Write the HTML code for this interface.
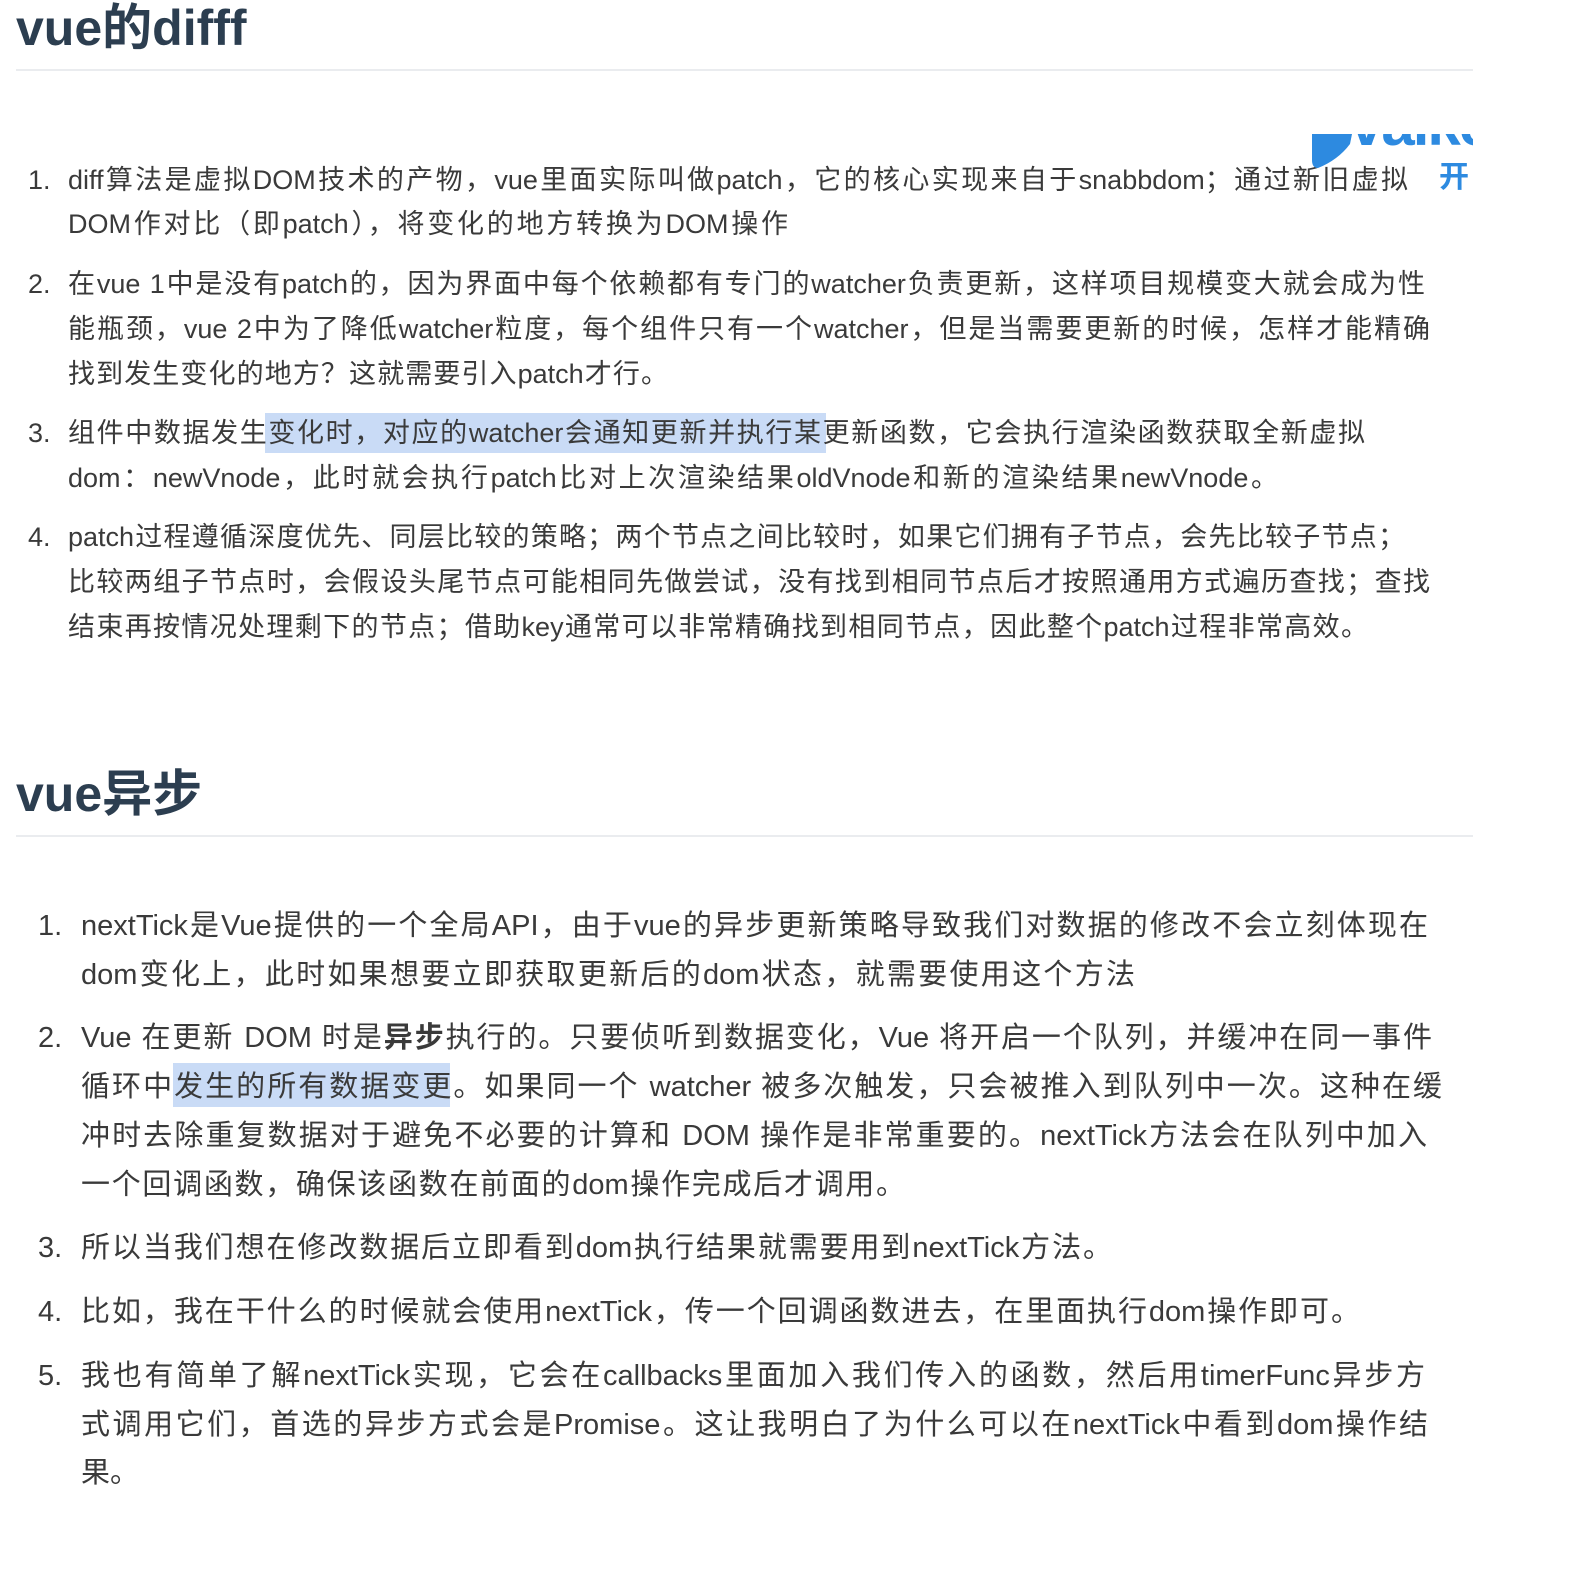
<!DOCTYPE html>
<html><head><meta charset="utf-8"><style>
body{margin:0;background:#fff;width:1580px;height:1592px;position:relative;overflow:hidden;font-family:"Liberation Sans","Noto Sans CJK SC",sans-serif;color:#3a3a3a}
.h{position:absolute;left:16px;font-weight:bold;font-size:50px;color:#2c3e50;line-height:60px}
.hr{position:absolute;left:16px;width:1457px;height:2px;background:#eaecef}
.l{position:absolute;white-space:nowrap;text-align:justify;text-align-last:justify;height:40px;line-height:40px;z-index:2}
.a{font-size:27px}
.b{font-size:29px;height:44px;line-height:44px}
.n{position:absolute;white-space:nowrap;z-index:2}
.hl{position:absolute;background:#c9dbf6;z-index:1}
</style></head><body>
<div class="h" style="top:-2px">vue的difff</div>
<div class="hr" style="top:69px"></div>

<div style="position:absolute;left:1300px;top:134px;width:173px;height:36px;overflow:hidden;z-index:3">
<svg width="60" height="40" style="position:absolute;left:8px;top:0"><path d="M4 0 H44 L42 10 Q30 26 10 34 Q4 34 4 26 Z" fill="#2d8ae0"/></svg>
<div style="position:absolute;left:50px;top:-44px;font-size:60px;font-weight:bold;color:#2d8ae0;font-family:'Liberation Sans',sans-serif;letter-spacing:-2px">vaike</div>
</div>
<div style="position:absolute;left:1439px;top:160px;font-size:30px;font-weight:bold;color:#2d8ae0;width:34px;overflow:hidden;line-height:36px">开</div>

<div class="hl" style="left:265px;top:413px;width:561px;height:40px"></div>

<div class="n a" style="left:28px;top:160px;line-height:40px">1.</div>
<div class="l a" style="left:68px;top:160px;width:1340px">diff算法是虚拟DOM技术的产物，vue里面实际叫做patch，它的核心实现来自于snabbdom；通过新旧虚拟</div>
<div class="l a" style="left:68px;top:204px;width:720px">DOM作对比（即patch），将变化的地方转换为DOM操作</div>
<div class="n a" style="left:28px;top:264px;line-height:40px">2.</div>
<div class="l a" style="left:68px;top:264px;width:1357px">在vue 1中是没有patch的，因为界面中每个依赖都有专门的watcher负责更新，这样项目规模变大就会成为性</div>
<div class="l a" style="left:68px;top:309px;width:1362px">能瓶颈，vue 2中为了降低watcher粒度，每个组件只有一个watcher，但是当需要更新的时候，怎样才能精确</div>
<div class="l a" style="left:68px;top:354px;width:600px">找到发生变化的地方？这就需要引入patch才行。</div>
<div class="n a" style="left:28px;top:413px;line-height:40px">3.</div>
<div class="l a" style="left:68px;top:413px;width:1297px">组件中数据发生变化时，对应的watcher会通知更新并执行某更新函数，它会执行渲染函数获取全新虚拟</div>
<div class="l a" style="left:68px;top:458px;width:1210px">dom：newVnode，此时就会执行patch比对上次渲染结果oldVnode和新的渲染结果newVnode。</div>
<div class="n a" style="left:28px;top:517px;line-height:40px">4.</div>
<div class="l a" style="left:68px;top:517px;width:1337px">patch过程遵循深度优先、同层比较的策略；两个节点之间比较时，如果它们拥有子节点，会先比较子节点；</div>
<div class="l a" style="left:68px;top:562px;width:1362px">比较两组子节点时，会假设头尾节点可能相同先做尝试，没有找到相同节点后才按照通用方式遍历查找；查找</div>
<div class="l a" style="left:68px;top:607px;width:1300px">结束再按情况处理剩下的节点；借助key通常可以非常精确找到相同节点，因此整个patch过程非常高效。</div>

<div class="h" style="top:764px">vue异步</div>
<div class="hr" style="top:835px"></div>

<div class="hl" style="left:173px;top:1063px;width:277px;height:44px"></div>

<div class="n b" style="left:38px;top:904px">1.</div>
<div class="l b" style="left:81px;top:904px;width:1347px">nextTick是Vue提供的一个全局API，由于vue的异步更新策略导致我们对数据的修改不会立刻体现在</div>
<div class="l b" style="left:81px;top:953px;width:1054px">dom变化上，此时如果想要立即获取更新后的dom状态，就需要使用这个方法</div>
<div class="n b" style="left:38px;top:1016px">2.</div>
<div class="l b" style="left:81px;top:1016px;width:1351px">Vue 在更新 DOM 时是<b>异步</b>执行的。只要侦听到数据变化，Vue 将开启一个队列，并缓冲在同一事件</div>
<div class="l b" style="left:81px;top:1065px;width:1361px">循环中发生的所有数据变更。如果同一个 watcher 被多次触发，只会被推入到队列中一次。这种在缓</div>
<div class="l b" style="left:81px;top:1114px;width:1346px">冲时去除重复数据对于避免不必要的计算和 DOM 操作是非常重要的。nextTick方法会在队列中加入</div>
<div class="l b" style="left:81px;top:1163px;width:824px">一个回调函数，确保该函数在前面的dom操作完成后才调用。</div>
<div class="n b" style="left:38px;top:1226px">3.</div>
<div class="l b" style="left:81px;top:1226px;width:1031px">所以当我们想在修改数据后立即看到dom执行结果就需要用到nextTick方法。</div>
<div class="n b" style="left:38px;top:1290px">4.</div>
<div class="l b" style="left:81px;top:1290px;width:1279px">比如，我在干什么的时候就会使用nextTick，传一个回调函数进去，在里面执行dom操作即可。</div>
<div class="n b" style="left:38px;top:1354px">5.</div>
<div class="l b" style="left:81px;top:1354px;width:1344px">我也有简单了解nextTick实现，它会在callbacks里面加入我们传入的函数，然后用timerFunc异步方</div>
<div class="l b" style="left:81px;top:1403px;width:1347px">式调用它们，首选的异步方式会是Promise。这让我明白了为什么可以在nextTick中看到dom操作结</div>
<div class="n b" style="left:81px;top:1451px">果。</div>
</body></html>
